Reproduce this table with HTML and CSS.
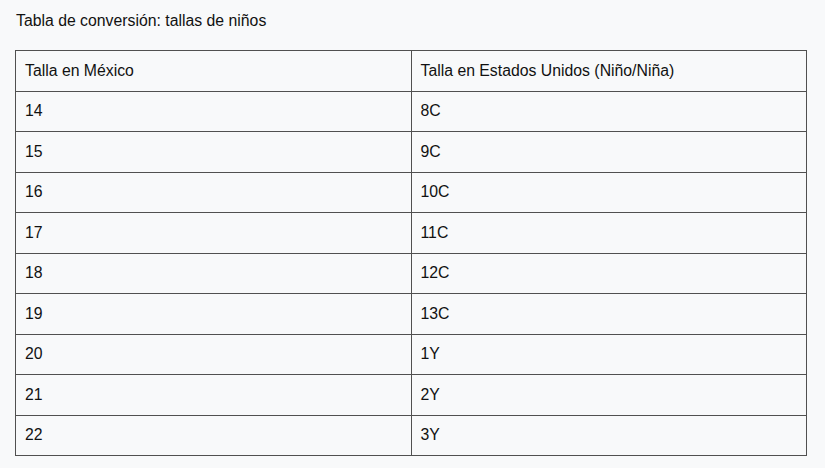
FILE: index.html
```html
<!DOCTYPE html>
<html lang="es">
<head>
<meta charset="utf-8">
<title>Tabla de conversión</title>
<link rel="stylesheet" href="styles.css">
</head>
<body>
<div class="page">
  <p class="title">Tabla de conversión: tallas de niños</p>
  <table class="sizes">
    <thead>
      <tr><th>Talla en México</th><th>Talla en Estados Unidos (Niño/Niña)</th></tr>
    </thead>
    <tbody>
      <tr><td>14</td><td>8C</td></tr>
      <tr><td>15</td><td>9C</td></tr>
      <tr><td>16</td><td>10C</td></tr>
      <tr><td>17</td><td>11C</td></tr>
      <tr><td>18</td><td>12C</td></tr>
      <tr><td>19</td><td>13C</td></tr>
      <tr><td>20</td><td>1Y</td></tr>
      <tr><td>21</td><td>2Y</td></tr>
      <tr><td>22</td><td>3Y</td></tr>
    </tbody>
  </table>
</div>
</body>
</html>
```
FILE: styles.css
```css
html, body {
  margin: 0;
  padding: 0;
  background: #f8f9fa;
}
body {
  font-family: "Liberation Sans", Arial, Helvetica, sans-serif;
  color: #111;
}
.page {
  padding: 11px 18px 0 15px;
}
.title {
  margin: 0 0 0 1px;
  font-size: 15.8px;
  line-height: 20px;
}
.sizes {
  margin-top: 19px;
  width: 792px;
  border-collapse: collapse;
  table-layout: fixed;
  font-size: 15.8px;
}
.sizes th,
.sizes td {
  border: 1px solid #505050;
  text-align: left;
  font-weight: normal;
  padding: 0 9px;
  height: 39.5px;
  line-height: 20px;
  vertical-align: middle;
}
```
